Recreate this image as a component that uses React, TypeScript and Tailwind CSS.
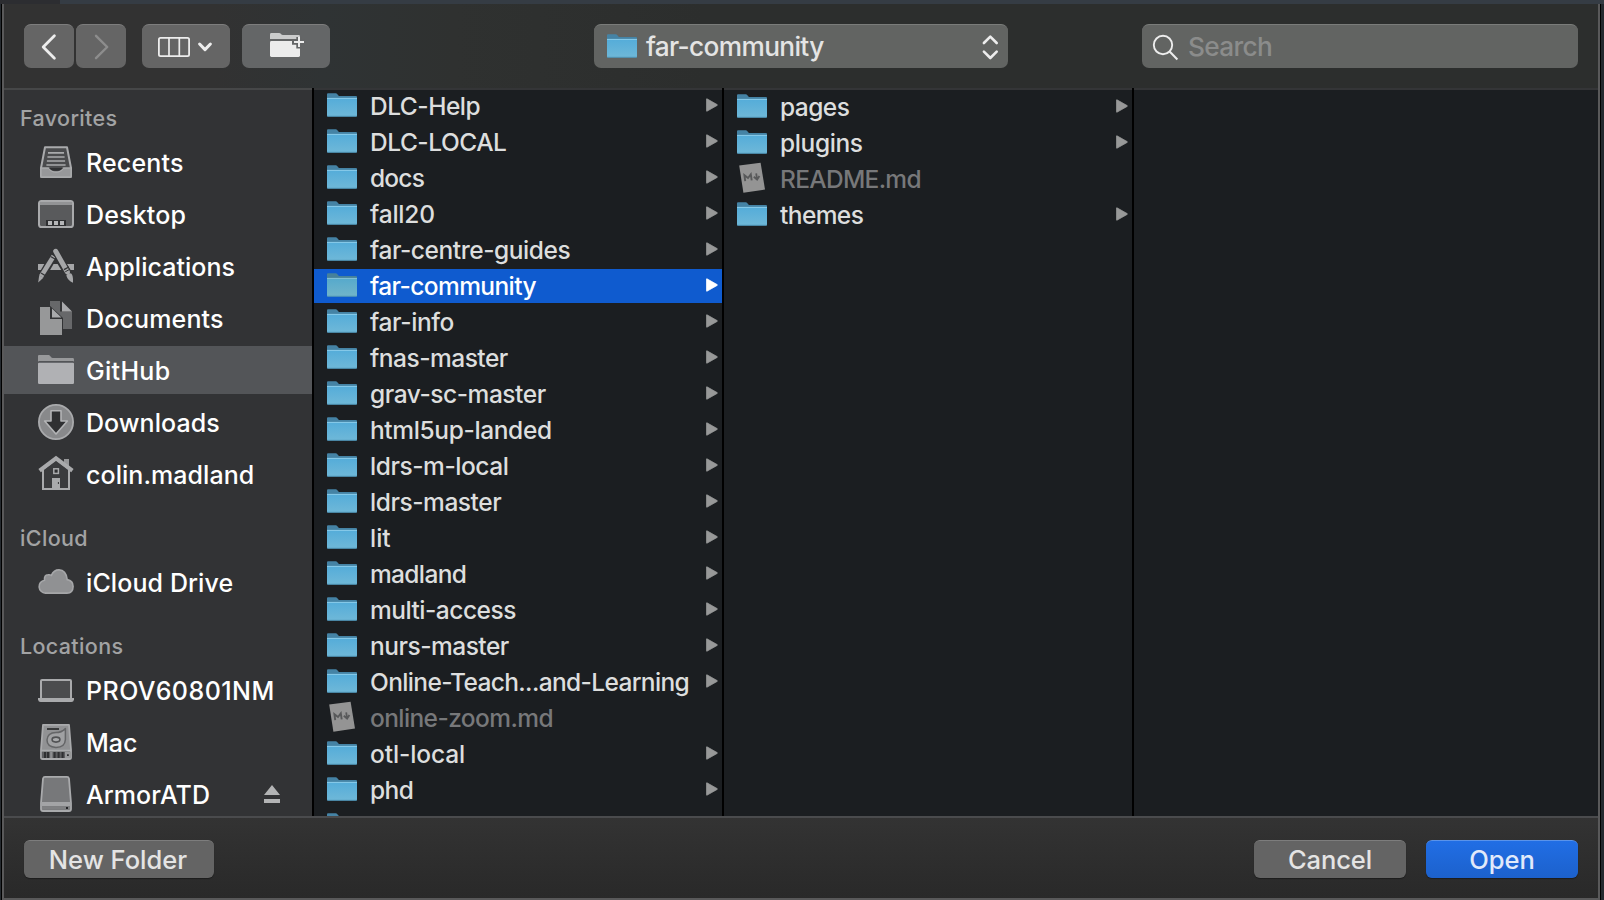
import React from "react";

type Entry = { name: string; kind?: "file"; track?: string };

const projects: Entry[] = [
  { name: "DLC-Help", track: "tracking-[-0.5px]" },
  { name: "DLC-LOCAL", track: "tracking-[-0.48px]" },
  { name: "docs", track: "tracking-[-0.8px]" },
  { name: "fall20", track: "tracking-[-0.2px]" },
  { name: "far-centre-guides" },
  { name: "far-community", track: "tracking-[-0.6px]" },
  { name: "far-info", track: "tracking-[-0.38px]" },
  { name: "fnas-master", track: "tracking-[-0.5px]" },
  { name: "grav-sc-master" },
  { name: "html5up-landed", track: "tracking-[-0.37px]" },
  { name: "ldrs-m-local" },
  { name: "ldrs-master" },
  { name: "lit", track: "tracking-normal" },
  { name: "madland", track: "tracking-[-0.65px]" },
  { name: "multi-access", track: "tracking-[-0.5px]" },
  { name: "nurs-master", track: "tracking-[-0.5px]" },
  { name: "Online-Teach...and-Learning", track: "tracking-[-0.64px]" },
  { name: "online-zoom.md", kind: "file", track: "tracking-[-0.6px]" },
  { name: "otl-local", track: "tracking-[-0.12px]" },
  { name: "phd", track: "tracking-[-0.6px]" },
  { name: "" },
];

const children: Entry[] = [
  { name: "pages", track: "tracking-[-0.55px]" },
  { name: "plugins", track: "tracking-[-0.38px]" },
  { name: "README.md", kind: "file", track: "tracking-[-0.7px]" },
  { name: "themes", track: "tracking-[-0.6px]" },
];

function Folder({ selected = false }: { selected?: boolean }) {
  return (
    <svg width="30" height="25" viewBox="0 0 30 25" className="shrink-0">
      <defs>
        <linearGradient id="folderFront" x1="0" y1="0" x2="0" y2="1">
          <stop offset="0" stopColor="#54acd9" />
          <stop offset="1" stopColor="#6fb8d8" />
        </linearGradient>
        <linearGradient id="folderFrontSel" x1="0" y1="0" x2="0" y2="1">
          <stop offset="0" stopColor="#55a9cc" />
          <stop offset="1" stopColor="#72b5c9" />
        </linearGradient>
      </defs>
      <path d="M0 1.2Q0 .2 1 .2H8.8Q9.6 .2 10.2 1L11.4 2.4Q12 3 13 3H29Q30 3 30 4V8H0Z" fill={selected ? "#46819a" : "#4583a5"} />
      <path d="M0 5H30V22.6Q30 23.6 29 23.6H1Q0 23.6 0 22.6Z" fill={selected ? "url(#folderFrontSel)" : "url(#folderFront)"} />
      <path d="M0 5.4H30" stroke={selected ? "#86c2d6" : "#8accea"} strokeWidth="1" />
      <path d="M.3 23.3H29.7" stroke="#4c92b4" strokeWidth=".9" />
    </svg>
  );
}

function MdFile() {
  return (
    <svg width="30" height="32" viewBox="0 0 30 32" className="shrink-0">
      <path d="M2.2 3.6L23.6 .8L28 27.6L6.4 30.8Z" fill="#949494" />
      <path d="M8.2 19.2L7.4 13.2L11 16L13.8 12.4L14.7 18.3" fill="none" stroke="#58595a" strokeWidth="1.9" />
      <path d="M19.2 11.4L20 17.2M16.8 14.8L20.1 17.6L22.4 14" fill="none" stroke="#58595a" strokeWidth="1.8" />
    </svg>
  );
}

function FileRow({ entry, selected }: { entry: Entry; selected?: boolean }) {
  const file = entry.kind === "file";
  const tone = file ? "text-[#77787a]" : selected ? "text-white" : "text-[#dddede]";
  const track = entry.track ?? "tracking-[-0.45px]";
  return (
    <div className={`mb-[2px] flex h-[34px] shrink-0 items-center pl-[13px] pr-1 ${selected ? "bg-[#0f5bcf]" : ""}`}>
      <div className="flex h-[34px] w-[30px] shrink-0 items-start">
        {file ? <MdFile /> : <div className="pt-1"><Folder selected={selected} /></div>}
      </div>
      <span className={`ml-[13px] flex-1 whitespace-nowrap text-[24.5px] font-[450] leading-[34px] ${track} ${tone}`}>{entry.name}</span>
      {!file && (
        <svg width="12" height="14" viewBox="0 0 12 14" className="mb-[2px] shrink-0">
          <path d="M1 .8L11.2 6.6Q11.8 7 11.2 7.4L1 13.2Q.4 13.4 .4 12.8V1.2Q.4 .6 1 .8Z" fill={selected ? "#fff" : "#989999"} stroke={selected ? "#fff" : "#989999"} strokeWidth=".7" />
        </svg>
      )}
    </div>
  );
}

const icons: Record<string, React.ReactNode> = {
  Recents: (
    <>
      <path d="M7 3.2H29L33 24V32.2Q33 33 32 33H4Q3 33 3 32.2V24Z" fill="#4a4b4d" stroke="#a9aaac" strokeWidth="2" strokeLinejoin="round" />
      <path d="M10 8.9H26M9.4 13H26.6M8.9 17H27.1M8.4 21H27.6" stroke="#a9aaac" strokeWidth="1.7" />
      <path d="M3 24H10Q11 24 11.6 25Q13 28 18 28Q23 28 24.4 25Q25 24 26 24H33V33H3Z" fill="#97989a" stroke="#a9aaac" strokeWidth="1.4" />
      <path d="M11 24H25Q23 26.8 18 26.8Q13 26.8 11 24Z" fill="#2f3032" />
    </>
  ),
  Desktop: (
    <>
      <rect x="1" y="5" width="34" height="26" rx="2.6" fill="#595a5c" stroke="#a9aaac" strokeWidth="2" />
      <path d="M2 6H34V9H2Z" fill="#929395" />
      <path d="M8 24H28V30H8Z" fill="#2f3032" />
      <path d="M10 25H14V29H10ZM16 25H20V29H16ZM22 25H26V29H22Z" fill="#b5b6b8" />
    </>
  ),
  Applications: (
    <>
      <path d="M0 16H36V22H0Z" fill="#a5a6a8" />
      <path d="M18.5 3L4 28" stroke="#323335" strokeWidth="8" />
      <path d="M16.5 3L31.5 28" stroke="#323335" strokeWidth="8" />
      <path d="M15.7 8L3 28.5" stroke="#a5a6a8" strokeWidth="4.6" />
      <path d="M12.6 8.4L17 11" stroke="#323335" strokeWidth="1.2" />
      <path d="M1.2 27.2L5.4 29.8L.2 34.5Z" fill="#a5a6a8" />
      <path d="M3 25L7 27.6" stroke="#323335" strokeWidth="1.2" />
      <path d="M17.5 3.5L29.4 24" stroke="#323335" strokeWidth="7" />
      <path d="M17.7 3.3L29.4 24" stroke="#a5a6a8" strokeWidth="5" strokeLinecap="round" />
      <path d="M26 21.6L30.8 19" stroke="#323335" strokeWidth="1.4" />
      <path d="M27.2 23.8L32 21.2" stroke="#323335" strokeWidth="1" />
      <path d="M28.3 27.4Q30.2 24.6 33.2 25.6Q35.4 27.5 35 34.8Q29.6 32 28.3 27.4Z" fill="#a5a6a8" />
    </>
  ),
  Documents: (
    <>
      <path d="M12 1H22V11.4H34V29H12Z" fill="#67686a" />
      <path d="M24 1.6L34 11.6H24Z" fill="#a9aaac" />
      <path d="M1 6H12.2L25 18V36H1Z" fill="#323335" />
      <path d="M2 7H12V19H24V35H2Z" fill="#979899" />
      <path d="M14 8.4L23.4 17.4H14Z" fill="#a9aaac" />
    </>
  ),
  GitHub: (
    <>
      <path d="M0 4Q0 3 1 3H10.6Q11.4 3 12 3.7L13.2 5.2Q13.8 6 14.8 6H34.6Q36 6 36 7.4V10H0Z" fill="#98999b" />
      <path d="M0 10.2Q0 9 1.2 9H34.8Q36 9 36 10.2V10.8H0Z" fill="#535558" />
      <path d="M0 11.8Q0 10.8 1 10.8H35Q36 10.8 36 11.8V30.8Q36 32 34.8 32H1.2Q0 32 0 30.8Z" fill="#b0b1b4" />
    </>
  ),
  Downloads: (
    <>
      <circle cx="18" cy="18" r="17.1" fill="#88898b" stroke="#a9aaac" strokeWidth="1.8" />
      <path d="M13 6.8H23V17H29.4L18 30L6.6 17H13Z" fill="#2f3032" stroke="#b3b4b6" strokeWidth="1.6" strokeLinejoin="round" />
    </>
  ),
  "colin.madland": (
    <>
      <path d="M26 3H31V12H26Z" fill="#97989a" />
      <path d="M5 13V33H31V13L18 3Z" fill="#3a3b3d" stroke="#a9aaac" strokeWidth="2" />
      <path d="M1.6 14.6L18 2.3L34.4 14.6" fill="none" stroke="#a9aaac" strokeWidth="4" />
      <rect x="15.8" y="12.8" width="4.6" height="4.6" fill="#2f3032" stroke="#a9aaac" strokeWidth="1.5" />
      <path d="M14 22H22V33H14Z" fill="#a9aaac" />
      <path d="M20.4 26V28" stroke="#323335" strokeWidth="1" />
    </>
  ),
  "iCloud Drive": (
    <path d="M7.4 29.1A6.5 6.5 0 0 1 6.5 16.2Q6 11 10 10.8Q12 10.4 13.4 11.4Q15.8 5.9 21 5.9Q28 6 29.2 15.6Q35.1 16.6 35.1 22.4Q35 28.8 29 29.1Z" fill="#909193" stroke="#a5a6a8" strokeWidth="1.6" />
  ),
  PROV60801NM: (
    <>
      <rect x="3" y="8" width="30" height="19" rx="1" fill="#4b4c4e" stroke="#a9aaac" strokeWidth="2" />
      <path d="M0 26H36V27.4Q35.6 30 33.4 30H2.6Q.4 30 0 27.4Z" fill="#a9aaac" />
    </>
  ),
  Mac: (
    <>
      <path d="M5 .9H31L33 25.8V33.4Q33 35 31.4 35H4.6Q3 35 3 33.4V25.8Z" fill="#919294" stroke="#a9aaac" strokeWidth="1.8" strokeLinejoin="round" />
      <path d="M9 5H21" stroke="#2f3032" strokeWidth="1.8" />
      <path d="M27.4 4.6V15.5Q27 23.4 18 23.4Q9 23 9 16Q9.4 8.8 18 8.6Q23.4 8.6 27.4 4.6Z" fill="#a0a1a3" stroke="#646567" strokeWidth="1.5" strokeLinejoin="round" />
      <ellipse cx="18" cy="15.6" rx="3.9" ry="2.5" fill="#a9aaac" stroke="#515254" strokeWidth="1.6" />
      <path d="M3.8 27.6H32.2V34H3.8Z" fill="#5c5d5f" />
      <path d="M7 28V34M10 28V34M16.6 28V34M20.6 28V34M24.6 28V34" stroke="#2f3032" strokeWidth="2" />
      <path d="M13.3 28V34" stroke="#8d8e90" strokeWidth="2.4" />
      <path d="M3 26.5H33" stroke="#a9aaac" strokeWidth="1.6" />
      <path d="M27 28H32V34H27Z" fill="#98999b" />
      <path d="M29 30.2H30.8V32H29Z" fill="#2f3032" />
    </>
  ),
  ArmorATD: (
    <>
      <path d="M7 .9H29Q30.6 .9 31 2.6L33 27V33Q33 35 31 35H5Q3 35 3 33V27L5 2.6Q5.4 .9 7 .9Z" fill="#77787a" stroke="#a9aaac" strokeWidth="1.8" />
      <path d="M3 26H33V30H3Z" fill="#a3a4a6" />
      <path d="M4 30.2H32V33.4H4Z" fill="#7f8082" />
      <path d="M28 31H30V33H28Z" fill="#232426" />
    </>
  ),
};

function SideItem({ name, active, eject, track = "tracking-[0.05px]" }: { name: string; active?: boolean; eject?: boolean; track?: string }) {
  return (
    <div className="shrink-0 py-[2px]">
      <div className={`flex h-12 items-center pl-[34px] pr-8 ${active ? "bg-[#535558]" : ""}`}>
        <svg width="36" height="36" viewBox="0 0 36 36" className="shrink-0 overflow-visible">{icons[name]}</svg>
        <span className={`ml-3 flex-1 whitespace-nowrap pt-[2px] text-[25px] font-medium leading-[46px] text-white ${track}`}>{name}</span>
        {eject && (
          <svg width="16" height="18" viewBox="0 0 16 18">
            <path d="M8 0L16 10H0ZM0 14H16V18H0Z" fill="#b3b4b5" />
          </svg>
        )}
      </div>
    </div>
  );
}

function SideHead({ children, first }: { children: React.ReactNode; first?: boolean }) {
  return (
    <div className={`flex shrink-0 items-end pb-[2px] pl-4 text-[21.5px] font-medium tracking-[0.35px] text-[#a2a3a4] ${first ? "h-[46px]" : "h-14"}`}>
      <span className="leading-8">{children}</span>
    </div>
  );
}

const toolButton = "flex h-11 items-center justify-center rounded-[7px] border-t border-[#7d7d7d] bg-[#656565]";
const pushButton = "flex h-[38px] items-start justify-center rounded-[6px] border-t text-[25.5px] font-[450] leading-[38px] shadow-[0_1px_1px_rgba(0,0,0,0.35)]";

export default function App() {
  return (
    <div className="flex h-[900px] w-[1604px] flex-col overflow-hidden bg-[#252a2f] font-['Inter','Liberation_Sans',sans-serif]">
      <div className="flex h-1 shrink-0 bg-[#353c44]">
        <div className="w-[60px] bg-[#2c2d31]" />
      </div>
      <div className="flex min-h-0 flex-1 pl-px pr-[3px]">
        <div className="w-px shrink-0 bg-black" />
        <div className="flex min-w-0 flex-1 flex-col border-x-2 border-b-2 border-[#59595a]">
          <header className="flex h-[84px] shrink-0 items-center bg-[linear-gradient(90deg,#323232_0px,#323232_210px,#2f3334_320px,#2f3130_450px,#2c2e2d_700px,#2c2e2d_100%)] pl-5 pr-5">
            <button className={`${toolButton} w-[50px]`}>
              <svg width="50" height="42" viewBox="0 0 50 42"><path d="M30.4 9.8L19.2 21L30.4 32.2" fill="none" stroke="#ededed" strokeWidth="2.8" strokeLinecap="round" strokeLinejoin="round" /></svg>
            </button>
            <button className={`${toolButton} ml-[2px] w-[50px]`}>
              <svg width="50" height="42" viewBox="0 0 50 42"><path d="M20 9.8L31.2 21L20 32.2" fill="none" stroke="#8d8d8d" strokeWidth="2.4" strokeLinecap="round" strokeLinejoin="round" /></svg>
            </button>
            <button className={`${toolButton} ml-4 w-[88px]`}>
              <svg width="88" height="42" viewBox="0 0 88 42" fill="none" stroke="#ededed">
                <rect x="16.9" y="11.9" width="30.2" height="18.2" rx="1.6" strokeWidth="1.8" />
                <path d="M27 12V30M37.3 12V30" strokeWidth="1.7" />
                <path d="M57.6 18L63 23.6L68.4 18" strokeWidth="3" strokeLinecap="round" strokeLinejoin="round" />
              </svg>
            </button>
            <button className="ml-3 flex h-11 w-[88px] items-center justify-center rounded-[7px] border-t border-[#7d7d7d] bg-[#646667]">
              <svg width="88" height="42" viewBox="0 0 88 42">
                <path d="M28 8.4Q28 7 29.4 7H37Q38.4 7 39.2 8.2Q39.8 9 41 9H56.6Q58 9 58 10.4V13H28Z" fill="#cbcccc" />
                <path d="M28 16.4Q28 15 29.4 15H58V29.6Q58 31 56.6 31H29.4Q28 31 28 29.6Z" fill="#ececec" />
                <path d="M57 11V22.6M50 16H63" stroke="#646667" strokeWidth="5.4" />
                <path d="M57 11V21M52 16H62" stroke="#ececec" strokeWidth="2" />
              </svg>
            </button>
            <div className="ml-[264px] flex h-11 w-[414px] items-center rounded-[7px] border-t border-[#7a7c7a] bg-[#626462] pl-[13px] pr-[9px]">
              <Folder />
              <span className="ml-[9px] flex-1 pt-px text-[26.25px] font-[450] leading-10 tracking-[-0.65px] text-[#e4e4e4]">far-community</span>
              <svg width="18" height="30" viewBox="0 0 18 30" fill="none" stroke="#ededed" strokeWidth="2.6" strokeLinecap="round" strokeLinejoin="round">
                <path d="M2.9 11L9.3 4.6L15.7 11M2.9 19.6L9.3 26L15.7 19.6" />
              </svg>
            </div>
            <div className="ml-auto flex h-11 w-[436px] items-center rounded-[7px] border-t border-[#7a7c7a] bg-[#626462] pl-2.5">
              <svg width="28" height="28" viewBox="0 0 28 28" fill="none" stroke="#ededed">
                <circle cx="11" cy="12" r="9.2" strokeWidth="1.9" />
                <path d="M17.6 18.6L25.4 26.4" strokeWidth="2.1" />
              </svg>
              <span className="ml-2 pt-px text-[26.25px] font-[450] leading-10 tracking-[-0.65px] text-[#8b8c8b]">Search</span>
            </div>
          </header>
          <main className="flex h-[728px] shrink-0">
            <aside className="flex w-[308px] shrink-0 flex-col overflow-hidden border-t-2 border-[#464748] bg-[#323335]">
              <SideHead first>Favorites</SideHead>
              <SideItem name="Recents" track="tracking-[0.15px]" />
              <SideItem name="Desktop" track="tracking-[0.15px]" />
              <SideItem name="Applications" />
              <SideItem name="Documents" track="tracking-[0.15px]" />
              <SideItem name="GitHub" active track="tracking-[0.3px]" />
              <SideItem name="Downloads" />
              <SideItem name="colin.madland" />
              <SideHead>iCloud</SideHead>
              <SideItem name="iCloud Drive" track="tracking-[0.1px]" />
              <SideHead>Locations</SideHead>
              <SideItem name="PROV60801NM" track="tracking-[0.45px]" />
              <SideItem name="Mac" />
              <SideItem name="ArmorATD" eject />
            </aside>
            <div className="w-[2px] shrink-0 bg-black" />
            <section className="w-[408px] shrink-0 overflow-hidden border-t-2 border-[#343537] bg-[#1b1e21]">
              <div className="-mt-px flex flex-col">
                {projects.map((p, i) => <FileRow key={i} entry={p} selected={p.name === "far-community"} />)}
              </div>
            </section>
            <div className="w-[2px] shrink-0 bg-black" />
            <section className="w-[408px] shrink-0 overflow-hidden border-t-2 border-[#343537] bg-[#1b1e21]">
              {children.map((p) => <FileRow key={p.name} entry={p} />)}
            </section>
            <div className="w-[2px] shrink-0 bg-black" />
            <section className="flex-1 border-t-2 border-[#343537] bg-[#1b1e21]" />
          </main>
          <footer className="flex min-h-0 flex-1 items-start border-t-2 border-[#4a4b4d] bg-linear-to-b from-[#333333] to-[#292929] px-5 pt-[22px]">
            <button className={`${pushButton} w-[190px] border-[#7d7d7d] bg-[#646464] pr-[2px] text-[#e4e4e4]`}>New Folder</button>
            <button className={`${pushButton} ml-auto w-[152px] border-[#7d7d7d] bg-[#646464] tracking-[-0.1px] text-[#e4e4e4]`}>Cancel</button>
            <button className={`${pushButton} ml-5 w-[152px] border-[#5a93ea] bg-linear-to-b from-[#216ee5] to-[#1c61cc] text-[#e1eafa]`}>Open</button>
          </footer>
        </div>
        <div className="w-px shrink-0 bg-black" />
      </div>
    </div>
  );
}
